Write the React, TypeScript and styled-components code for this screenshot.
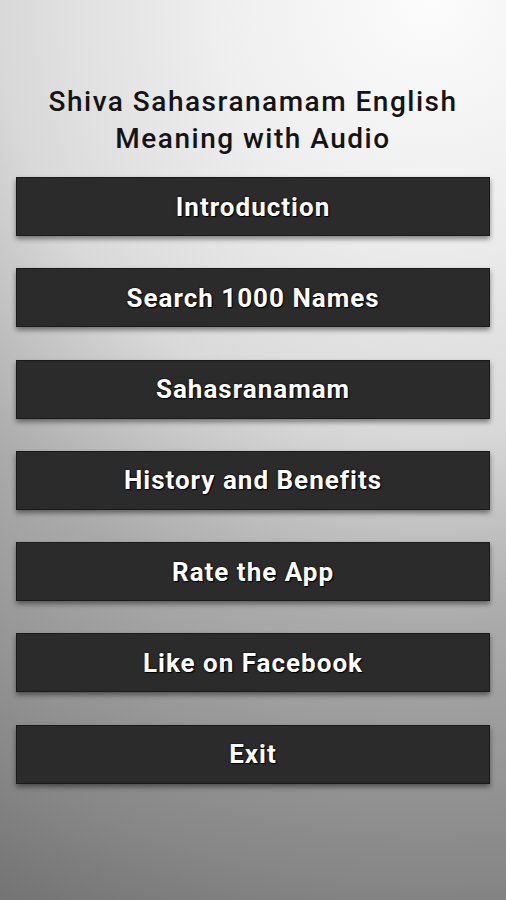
import React from "react";
import styled, { createGlobalStyle } from "styled-components";

const GlobalStyle = createGlobalStyle`
  html, body {
    margin: 0;
    padding: 0;
  }
  body {
    font-family: Roboto, "Liberation Sans", sans-serif;
  }
`;

const Screen = styled.main`
  width: 100%;
  min-height: 100vh;
  box-sizing: border-box;
  padding: 84px 16px 0;
  display: flex;
  flex-direction: column;
  background: radial-gradient(
    circle at 85% 0%,
    #fcfcfc 0px,
    #eeeeee 220px,
    #d9d9d9 430px,
    #ababab 620px,
    #868686 880px,
    #737373 1000px
  );
`;

const Title = styled.h1`
  margin: 0 0 20px;
  font-size: 28px;
  line-height: 36.5px;
  font-weight: 500;
  letter-spacing: 1.5px;
  color: #141414;
  text-align: center;
`;

const Menu = styled.nav`
  display: flex;
  flex-direction: column;
  gap: 32.3px;
`;

const MenuButton = styled.button`
  height: 59px;
  width: 100%;
  box-sizing: border-box;
  border: 1px solid #1a1a1a;
  background: #2b2b2b;
  color: #ffffff;
  font-family: Roboto, "Liberation Sans", sans-serif;
  font-size: 26px;
  font-weight: 700;
  letter-spacing: 1px;
  text-align: center;
  text-shadow: 0 0 2px #000, 1px 1px 1px #000;
  box-shadow: 0 3px 5px rgba(0, 0, 0, 0.45);
  cursor: pointer;
`;

const items = [
  "Introduction",
  "Search 1000 Names",
  "Sahasranamam",
  "History and Benefits",
  "Rate the App",
  "Like on Facebook",
  "Exit",
];

const App = () => {
  return (
    <>
      <GlobalStyle />
      <Screen>
        <Title>
          Shiva Sahasranamam English
          <br />
          Meaning with Audio
        </Title>
        <Menu>
          {items.map((label) => (
            <MenuButton key={label}>{label}</MenuButton>
          ))}
        </Menu>
      </Screen>
    </>
  );
};

export default App;
